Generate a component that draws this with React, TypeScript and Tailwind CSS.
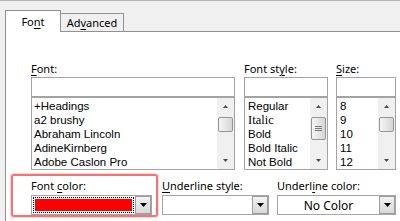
import React from "react";

const ui = "font-['Noto_Sans',sans-serif]";
const list = "font-['Liberation_Sans',Arial,sans-serif]";

function Mn({ children }: { children: React.ReactNode }) {
  return <span className="underline decoration-1 underline-offset-2">{children}</span>;
}

function Tri({ down = false, big = false }: { down?: boolean; big?: boolean }) {
  const w = big ? 7 : 5;
  const h = big ? 4 : 3;
  return (
    <svg width={w} height={h} viewBox={`0 0 ${w} ${h}`} className="block">
      <path
        d={down ? `M0 0H${w}L${w / 2} ${h}Z` : `M0 ${h}H${w}L${w / 2} 0Z`}
        fill={big ? "#000" : "#4a4a4a"}
      />
    </svg>
  );
}

function ScrollBar({ grip = false }: { grip?: boolean }) {
  return (
    <div className="flex w-[17px] flex-col bg-[#f0f0f0]">
      <div className="flex h-[17px] items-center justify-center">
        <Tri />
      </div>
      <div
        className={
          grip
            ? "mx-px mt-[2px] flex h-[23px] flex-col items-center justify-center gap-px rounded-[2px] border border-[#959595] bg-gradient-to-r from-[#f5f5f5] to-[#d6d6d6]"
            : "mx-px mt-[2px] h-[15px] rounded-[2px] border border-[#959595] bg-gradient-to-r from-[#f5f5f5] to-[#d6d6d6]"
        }
      >
        {grip ? (
          <>
            <div className="h-px w-[7px] bg-[#7a7a7a]" />
            <div className="h-px w-[7px] bg-[#7a7a7a]" />
            <div className="h-px w-[7px] bg-[#7a7a7a]" />
          </>
        ) : null}
      </div>
      <div className="flex-1" />
      <div className="flex h-[17px] items-center justify-center">
        <Tri down />
      </div>
    </div>
  );
}

function Column({
  label,
  items,
  width,
  pad,
  grip,
}: {
  label: React.ReactNode;
  items: React.ReactNode[];
  width: string;
  pad: string;
  grip?: boolean;
}) {
  return (
    <div className={`flex flex-col ${width}`}>
      <div className="h-[15px] leading-[15px]">{label}</div>
      <div className="mt-px h-[20px] border border-[#a3a3a3] bg-white" />
      <div className="flex h-[73px] border border-[#a3a3a3] bg-white">
        <ul className={`flex-1 pt-px text-[11.5px] leading-[14px] ${list} ${pad}`}>
          {items.map((it, i) => (
            <li key={i} className="h-[14px] whitespace-nowrap">
              {it}
            </li>
          ))}
        </ul>
        <ScrollBar grip={grip} />
      </div>
    </div>
  );
}

function DropButton() {
  return (
    <div className="flex w-[16px] items-center justify-center border border-[#9c9c9c] bg-gradient-to-b from-[#f3f3f3] to-[#d8d8d8]">
      <Tri down big />
    </div>
  );
}

export default function App() {
  return (
    <div
      className={`h-[221px] w-[400px] overflow-hidden border-t border-[#b4b4b4] bg-[#f0f0f0] text-[11px] text-black ${ui}`}
    >
      <div className="flex items-end pl-[5px] pt-[9px]">
        <div className="relative z-10 -mb-px flex h-[22px] w-[56px] justify-center border border-b-0 border-[#919191] bg-white pt-[3px] leading-[15px]">
          <span>
            Fo<Mn>n</Mn>t
          </span>
        </div>
        <div className="flex h-[18px] w-[63px] justify-center border border-b-0 border-l-0 border-[#919191] bg-[#f0f0f0] pt-[1px] leading-[15px]">
          <span>
            Ad<Mn>v</Mn>anced
          </span>
        </div>
      </div>

      <div className="ml-[5px] h-[200px] border-l border-t border-[#919191] bg-white pt-[29px]">
        <div className="ml-[25px] flex">
          <Column
            width="w-[204px]"
            pad="pl-[2px]"
            label={
              <>
                <Mn>F</Mn>ont:
              </>
            }
            items={["+Headings", "a2 brushy", "Abraham Lincoln", "AdineKirnberg", "Adobe Caslon Pro"]}
          />
          <div className="ml-[9px]">
            <Column
              width="w-[84px]"
              pad="pl-[3px]"
              grip
              label={
                <>
                  Font st<Mn>y</Mn>le:
                </>
              }
              items={[
                "Regular",
                <span className="font-['Liberation_Serif',serif] text-[12.5px]">Italic</span>,
                "Bold",
                "Bold Italic",
                "Not Bold",
              ]}
            />
          </div>
          <div className="ml-[8px]">
            <Column
              width="w-[60px]"
              pad="pl-[3px]"
              label={
                <>
                  <Mn>S</Mn>ize:
                </>
              }
              items={["8", "9", "10", "11", "12"]}
            />
          </div>
        </div>

        <div className="ml-[5px] mt-[4px] flex items-start">
          <div className="rounded-[3px] border-2 border-[#f27575] pl-[18px] pr-[4px] pt-[2px] shadow-[0_0_0_1px_rgba(242,117,117,0.3)]">
            <div className="h-[15px] leading-[15px]">
              Font <Mn>c</Mn>olor:
            </div>
            <div className="mt-[2px] flex h-[20px] w-[121px] border border-[#a6a6a6] bg-white">
              <div className="m-px flex flex-1 border border-dotted border-black p-px">
                <div className="flex-1 bg-[#ff0000]" />
              </div>
              <DropButton />
            </div>
          </div>

          <div className="ml-[4px] w-[107px] pt-[4px]">
            <div className="h-[15px] leading-[15px]">
              <Mn>U</Mn>nderline style:
            </div>
            <div className="mt-[2px] flex h-[20px] justify-end border border-[#a6a6a6] bg-white">
              <DropButton />
            </div>
          </div>

          <div className="ml-[8px] w-[119px] pt-[4px]">
            <div className="h-[15px] leading-[15px]">
              Underl<Mn>i</Mn>ne color:
            </div>
            <div className="mt-[2px] flex h-[20px] border border-[#a6a6a6] bg-white">
              <div className="flex flex-1 items-center justify-center text-[12px] leading-[15px]">No Color</div>
              <DropButton />
            </div>
          </div>
        </div>
      </div>
    </div>
  );
}
